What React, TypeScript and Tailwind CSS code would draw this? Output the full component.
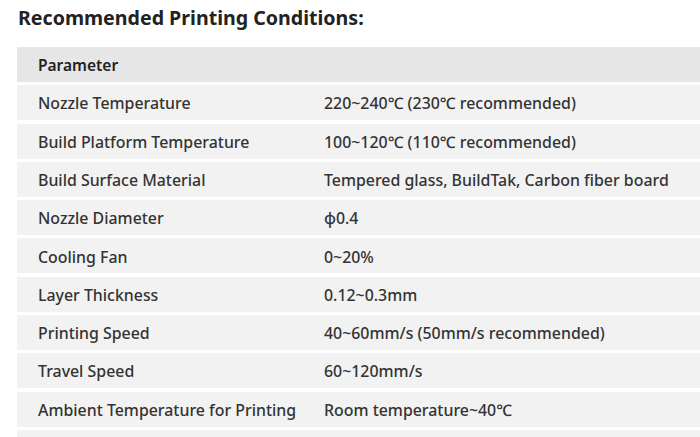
import * as React from 'react';

const rows: [string, string][] = [
	['Nozzle Temperature', '220~240℃ (230℃ recommended)'],
	['Build Platform Temperature', '100~120℃ (110℃ recommended)'],
	['Build Surface Material', 'Tempered glass, BuildTak, Carbon fiber board'],
	['Nozzle Diameter', 'φ0.4'],
	['Cooling Fan', '0~20%'],
	['Layer Thickness', '0.12~0.3mm'],
	['Printing Speed', '40~60mm/s (50mm/s recommended)'],
	['Travel Speed', '60~120mm/s'],
	['Ambient Temperature for Printing', 'Room temperature~40℃'],
];

function App() {
	return (
		<div
			className="h-[437px] w-[700px] overflow-hidden bg-white text-[#333]"
			style={{ fontFamily: '"Noto Sans", "Open Sans", sans-serif' }}
		>
			<h2 className="pl-[18px] pt-[5px] text-[19.6px] font-bold leading-[26px] text-[#222]">
				Recommended Printing Conditions:
			</h2>
			<div className="ml-[17px] mt-[16px] flex flex-col gap-[3.3px]">
				<div className="flex h-[35px] items-center bg-[#e6e6e6] pl-[21px] pt-[2px] text-[15.5px] font-semibold text-[#222]">
					Parameter
				</div>
				{rows.map(([label, value]) => (
					<div key={label} className="flex h-[35px] items-center bg-[#f2f2f2] pt-[3px] text-[15.9px] font-medium">
						<div className="w-[307px] shrink-0 pl-[21px]">{label}</div>
						<div>{value}</div>
					</div>
				))}
				<div className="h-[35px] bg-[#f2f2f2]" />
			</div>
		</div>
	);
}

export default App;
